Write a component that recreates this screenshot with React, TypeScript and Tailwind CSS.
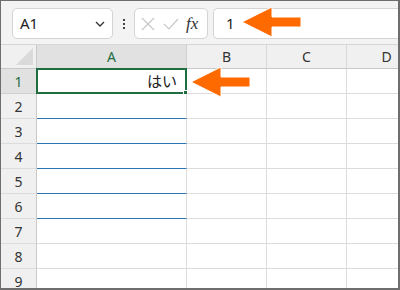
import React from "react";

const font = { fontFamily: '"Noto Sans", "Noto Sans CJK JP", sans-serif' };

const Arrow = ({ className }: { className: string }) => (
  <svg className={className} width="64" height="32" viewBox="0 0 64 32">
    <polygon
      points="1,16 31,1 31,11 60,11 60,21 31,21 31,31"
      fill="#ff6a00"
      stroke="#ffffff"
      strokeWidth="1"
      strokeLinejoin="round"
    />
  </svg>
);

const Toolbar = () => (
  <div className="flex h-[44px] items-start bg-[#f3f3f3] pl-[11px] pt-[7px] border-b border-[#d6d6d6]">
    <div className="flex h-[31px] w-[101px] items-center justify-between rounded-[5px] border border-[#d4d4d4] bg-white pl-[7px] pr-[6px]">
      <span className="text-[15px] text-[#222]">A1</span>
      <svg width="12" height="12" viewBox="0 0 12 12">
        <path d="M2 4 L6 8 L10 4" stroke="#333" strokeWidth="1.3" fill="none" />
      </svg>
    </div>
    <div className="flex h-[31px] w-[21px] flex-col items-center justify-center gap-[2px]">
      <div className="h-[2px] w-[2px] bg-[#444]" />
      <div className="h-[2px] w-[2px] bg-[#444]" />
      <div className="h-[2px] w-[2px] bg-[#444]" />
    </div>
    <div className="flex h-[31px] w-[74px] items-center rounded-[5px] border border-[#d4d4d4] bg-white pl-[6px]">
      <svg width="14" height="14" viewBox="0 0 14 14">
        <path d="M1 1 L13 13 M13 1 L1 13" stroke="#c8c8c8" strokeWidth="1.2" />
      </svg>
      <svg className="ml-[8px]" width="16" height="14" viewBox="0 0 16 14">
        <path d="M1 7 L6 12 L15 2" stroke="#c8c8c8" strokeWidth="1.2" fill="none" />
      </svg>
      <span className="ml-[7px] font-['Liberation_Serif'] text-[17px] italic text-[#333]">fx</span>
    </div>
    <div className="ml-[5px] flex h-[31px] flex-1 items-center rounded-l-[5px] border border-r-0 border-[#d4d4d4] bg-white pl-[12px]">
      <span className="text-[15px] text-[#222]">1</span>
    </div>
  </div>
);

const cols = ["A", "B", "C", "D"];
const widths = ["w-[150px]", "w-[80px]", "w-[80px]", "w-[80px]"];
const rows = [1, 2, 3, 4, 5, 6, 7, 8, 9];

const Grid = () => (
  <div className="flex flex-col">
    <div className="flex h-[24px]">
      <div className="relative w-[36px] shrink-0 border-r border-b border-[#c8c8c8] bg-[#f0f0f0]">
        <svg className="absolute right-[3px] bottom-[3px]" width="17" height="17" viewBox="0 0 17 17">
          <polygon points="17,0 17,17 0,17" fill="#dadada" />
        </svg>
      </div>
      {cols.map((c, i) => (
        <div
          key={c}
          className={`${widths[i]} shrink-0 flex items-center justify-center border-r border-b text-[14px] ${
            i === 0
              ? "bg-[#e1e1e1] text-[#1e6e42] border-b-[#c8c8c8] border-r-[#d0d0d0]"
              : "bg-[#f0f0f0] text-[#333] border-[#d9d9d9] border-b-[#c8c8c8]"
          }`}
        >
          {c}
        </div>
      ))}
    </div>
    {rows.map((r) => (
      <div key={r} className="flex h-[25px] shrink-0">
        <div
          className={`flex w-[36px] shrink-0 items-center justify-center border-r border-b border-r-[#c8c8c8] text-[14px] ${
            r === 1 ? "bg-[#e1e1e1] text-[#1e6e42] border-b-[#d0d0d0]" : "bg-[#f0f0f0] text-[#333] border-b-[#dcdcdc]"
          }`}
        >
          {r}
        </div>
        {cols.map((c, i) => {
          const blue = i === 0 && r >= 2 && r <= 6;
          return (
            <div
              key={c}
              className={`${widths[i]} relative shrink-0 border-r border-b border-r-[#dcdcdc] bg-white ${
                blue ? "border-b-[#2e75b6]" : "border-b-[#dcdcdc]"
              }`}
            >
              {r === 1 && i === 0 && (
                <div className="absolute -left-[1px] -top-[1px] right-[-1px] bottom-[-1px] flex items-center justify-end border-2 border-[#1e6e42] pr-[8px]">
                  <span className="text-[15px] text-[#222]">はい</span>
                  <div className="absolute -right-[4px] -bottom-[4px] h-[6px] w-[6px] border border-white bg-[#1e6e42]" />
                </div>
              )}
            </div>
          );
        })}
      </div>
    ))}
  </div>
);

export default function App() {
  return (
    <div
      className="relative h-[290px] w-[400px] overflow-hidden border-t border-l border-r-2 border-b-2 border-[#6e6e6e] bg-white"
      style={font}
    >
      <Toolbar />
      <Grid />
      <Arrow className="absolute left-[240px] top-[5px]" />
      <Arrow className="absolute left-[189px] top-[65px]" />
    </div>
  );
}
